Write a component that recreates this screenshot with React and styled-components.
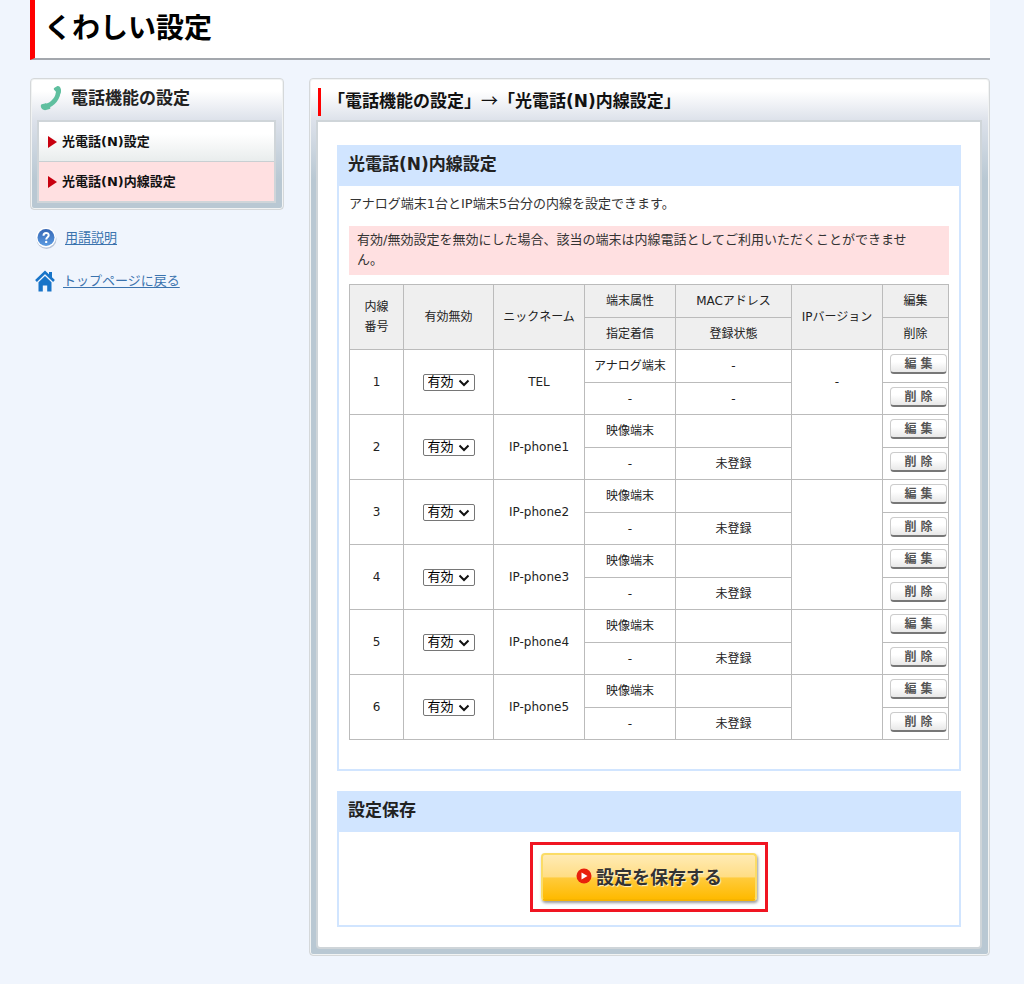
import React, { useState } from 'react';
import styled, { createGlobalStyle } from 'styled-components';

const initialRows = [
  { no: 1, name: 'TEL', type: 'アナログ端末', incoming: '-', mac: '-', status: '-', ip: '-' },
  { no: 2, name: 'IP-phone1', type: '映像端末', incoming: '-', mac: '', status: '未登録', ip: '' },
  { no: 3, name: 'IP-phone2', type: '映像端末', incoming: '-', mac: '', status: '未登録', ip: '' },
  { no: 4, name: 'IP-phone3', type: '映像端末', incoming: '-', mac: '', status: '未登録', ip: '' },
  { no: 5, name: 'IP-phone4', type: '映像端末', incoming: '-', mac: '', status: '未登録', ip: '' },
  { no: 6, name: 'IP-phone5', type: '映像端末', incoming: '-', mac: '', status: '未登録', ip: '' },
];

const menus = [
  { label: '光電話(N)設定', active: false },
  { label: '光電話(N)内線設定', active: true },
];

const PhoneIcon = () => (
  <svg width="22" height="26" viewBox="0 0 22 26" aria-hidden="true">
    <path
      d="M18.200 5C18.800 12 13.500 19.800 4.500 21.800"
      fill="none"
      stroke="#5fbf9f"
      strokeWidth="4.600"
      strokeLinecap="round"
    />
    <path
      d="M14.500 2.800 17 1.200c1.600-.9 3.300.6 3.800 2.800.5 2 .2 4.300-1 5l-2.600 1.200c-.9.300-1.600-.6-1.400-1.500l.3-2-1.800-1.800c-.8-.7-.7-1.600.200-2.100z"
      fill="#5fbf9f"
    />
    <path
      d="M1.800 19.200c-1.300.5-1.200 2.300-.4 3.800.8 1.600 2.800 2.400 4.600 2.100l3.600-1.100c.9-.4 1-1.400.4-2.100L6.700 18.900c-.5-.5-1-.6-1.700-.5z"
      fill="#5fbf9f"
    />
  </svg>
);

const HelpIcon = () => (
  <svg width="22" height="24" viewBox="0 0 22 24" aria-hidden="true">
    <defs>
      <linearGradient id="help" x1="0" y1="0" x2="0" y2="1">
        <stop offset="0" stopColor="#3566b4" />
        <stop offset="1" stopColor="#5b9be2" />
      </linearGradient>
    </defs>
    <circle cx="11.500" cy="13" r="10" fill="#b9c6da" />
    <circle cx="11" cy="11.500" r="10" fill="#fff" />
    <circle cx="11" cy="11.500" r="8.500" fill="url(#help)" />
    <path
      d="M8.500 9.700c0-3.700 5.400-3.500 5.200-.3-.1 1.900-2.500 1.800-2.500 4"
      fill="none"
      stroke="#fff"
      strokeWidth="2"
    />
    <circle cx="11.200" cy="15.900" r="1.200" fill="#fff" />
  </svg>
);

const HomeIcon = () => (
  <svg width="20" height="22" viewBox="0 0 20 22" aria-hidden="true">
    <path d="M14 2h3v6l-3-3z" fill="#1874c8" />
    <path d="M1 11 10 2.300l9 8.700" fill="none" stroke="#1874c8" strokeWidth="2.600" />
    <path d="M10 6 3.500 12.300V21.500h4.300v-6h4.400v6h4.300v-9.200z" fill="#1874c8" />
  </svg>
);

const PlayIcon = () => (
  <svg width="16" height="16" viewBox="0 0 16 16" aria-hidden="true">
    <circle cx="8" cy="8" r="7.500" fill="#e8200c" />
    <path d="M5.500 4.500 11.500 8l-6 3.500z" fill="#fff" />
  </svg>
);

const App = () => {
  const [enabled, setEnabled] = useState({});

  const handleChange = (no, value) => {
    setEnabled({ ...enabled, [no]: value });
  };

  return (
    <>
      <GlobalStyle />
      <Page>
        <Header>
          <PageTitle>くわしい設定</PageTitle>
        </Header>
        <Columns>
          <Side>
            <Panel>
              <SideTitle>
                <PhoneIcon />
                電話機能の設定
              </SideTitle>
              <Menu>
                {menus.map((menu) => (
                  <MenuItem key={menu.label} $active={menu.active}>
                    <MenuLink href="#">{menu.label}</MenuLink>
                  </MenuItem>
                ))}
              </Menu>
            </Panel>
            <Links>
              <LinkRow>
                <HelpIcon />
                <TextLink href="#">用語説明</TextLink>
              </LinkRow>
              <LinkRow>
                <HomeIcon />
                <TextLink href="#">トップページに戻る</TextLink>
              </LinkRow>
            </Links>
          </Side>
          <Main>
            <Panel>
              <Breadcrumb>
                <BreadcrumbText>
                  「電話機能の設定」<Arrow>→</Arrow>「光電話(N)内線設定」
                </BreadcrumbText>
              </Breadcrumb>
              <Content>
                <Section>
                  <SectionTitle>光電話(N)内線設定</SectionTitle>
                  <SectionBody>
                    <Description>アナログ端末1台とIP端末5台分の内線を設定できます。</Description>
                    <Notice>
                      有効/無効設定を無効にした場合、該当の端末は内線電話としてご利用いただくことができません。
                    </Notice>
                    <Table>
                      <colgroup>
                        <Col $width={54} />
                        <Col $width={90} />
                        <Col $width={91} />
                        <Col $width={91} />
                        <Col />
                        <Col $width={91} />
                        <Col $width={66} />
                      </colgroup>
                      <thead>
                        <Row $height={33}>
                          <Th rowSpan={2}>
                            内線
                            <br />
                            番号
                          </Th>
                          <Th rowSpan={2}>有効無効</Th>
                          <Th rowSpan={2}>ニックネーム</Th>
                          <Th>端末属性</Th>
                          <Th>MACアドレス</Th>
                          <Th rowSpan={2}>IPバージョン</Th>
                          <Th>編集</Th>
                        </Row>
                        <Row $height={32}>
                          <Th>指定着信</Th>
                          <Th>登録状態</Th>
                          <Th>削除</Th>
                        </Row>
                      </thead>
                      <tbody>
                        {initialRows.map((row) => (
                          <React.Fragment key={row.no}>
                            <Row $height={33}>
                              <Td rowSpan={2}>{row.no}</Td>
                              <Td rowSpan={2}>
                                <SelectWrap>
                                  <Select
                                    aria-label={`内線${row.no} 有効無効`}
                                    value={enabled[row.no] || 'on'}
                                    onChange={(e) => handleChange(row.no, e.target.value)}
                                  >
                                    <option value="on">有効</option>
                                    <option value="off">無効</option>
                                  </Select>
                                  <Chevron viewBox="0 0 12 8" aria-hidden="true">
                                    <path d="M1.500 1.500 6 6l4.500-4.500" />
                                  </Chevron>
                                </SelectWrap>
                              </Td>
                              <Td rowSpan={2}>{row.name}</Td>
                              <Td>{row.type}</Td>
                              <Td>{row.mac}</Td>
                              <Td rowSpan={2}>{row.ip}</Td>
                              <ActionTd>
                                <SmallButton type="button">編 集</SmallButton>
                              </ActionTd>
                            </Row>
                            <Row $height={32}>
                              <Td>{row.incoming}</Td>
                              <Td>{row.status}</Td>
                              <ActionTd>
                                <SmallButton type="button">削 除</SmallButton>
                              </ActionTd>
                            </Row>
                          </React.Fragment>
                        ))}
                      </tbody>
                    </Table>
                  </SectionBody>
                </Section>
                <Section>
                  <SectionTitle>設定保存</SectionTitle>
                  <SaveBody>
                    <SaveFrame>
                      <SaveButton type="button">
                        <PlayIcon />
                        設定を保存する
                      </SaveButton>
                    </SaveFrame>
                  </SaveBody>
                </Section>
              </Content>
            </Panel>
          </Main>
        </Columns>
      </Page>
    </>
  );
};

const GlobalStyle = createGlobalStyle`
  * {
    box-sizing: border-box;
  }
  body {
    margin: 0;
    background-color: #f0f5fd;
    color: #333;
    font-family: 'DejaVu Sans', 'Noto Sans CJK JP', sans-serif;
    font-size: 13px;
    line-height: 20px;
  }
  h1, h2, h3, p, ul {
    margin: 0;
    padding: 0;
  }
  button, select {
    font-family: inherit;
  }
`;

const Page = styled.div`
  padding: 0 34px 29px 30px;
`;

const Header = styled.header`
  background-color: white;
  border-left: 5px solid #f00;
  border-bottom: 2px solid #a3a7ad;
  padding: 8px 9px;
`;

const PageTitle = styled.h1`
  color: #000;
  font-size: 28px;
  font-weight: 700;
  line-height: 42px;
`;

const Columns = styled.div`
  display: flex;
  align-items: flex-start;
  column-gap: 25px;
  margin-top: 18px;
`;

const Side = styled.aside`
  flex: 0 0 254px;
`;

const Main = styled.main`
  flex: 1;
  min-width: 0;
`;

const Panel = styled.div`
  padding: 0 7px 6px 6px;
  border: 1px solid #d5d8da;
  border-radius: 4px;
  background: linear-gradient(#fff 12px, #dce1ea 42px, #b9c8d3 100px);
  box-shadow: inset 0 0 0 1px #f1f3f3;
`;

const SideTitle = styled.h2`
  display: flex;
  align-items: center;
  column-gap: 9px;
  height: 41px;
  padding: 0 0 4px 3px;
  color: #222;
  font-size: 17px;
  font-weight: 700;
`;

const Menu = styled.ul`
  list-style: none;
  border: 2px solid #cfd5d9;
`;

const MenuItem = styled.li`
  background: ${({ $active }) => ($active ? '#ffe0e1' : 'linear-gradient(#fff 30%, #e9eded)')};
  & + & {
    border-top: 1px solid #c9cfd2;
  }
`;

const MenuLink = styled.a`
  display: flex;
  align-items: center;
  column-gap: 5px;
  height: 39px;
  padding-left: 9px;
  color: #111;
  font-weight: 700;
  text-decoration: none;
  &::before {
    content: '';
    border: 6px solid transparent;
    border-left: 9px solid #c8000f;
    border-right: 0;
  }
`;

const Links = styled.ul`
  display: flex;
  flex-direction: column;
  row-gap: 19px;
  margin-top: 16px;
  padding-left: 5px;
  list-style: none;
`;

const LinkRow = styled.li`
  display: flex;
  align-items: center;
  column-gap: 8px;
  height: 24px;
`;

const TextLink = styled.a`
  color: #3b73ae;
  text-underline-offset: 2px;
`;

const Breadcrumb = styled.div`
  height: 41px;
  padding: 9px 0 0 2px;
`;

const BreadcrumbText = styled.h2`
  height: 28px;
  padding-left: 7px;
  border-left: 3px solid #f00;
  color: #111;
  font-size: 17px;
  font-weight: 700;
  line-height: 24px;
`;

const Arrow = styled.span`
  font-family: 'Noto Sans CJK JP', sans-serif;
  font-weight: 400;
`;

const Content = styled.div`
  display: flex;
  flex-direction: column;
  row-gap: 20px;
  padding: 23px 19px 20px 19px;
  border: 2px solid #cfd5d9;
  border-radius: 0 0 4px 4px;
  background-color: white;
`;

const Section = styled.section`
  border: 2px solid #d1e5ff;
  border-top: 0;
`;

const SectionTitle = styled.h3`
  padding: 0 9px 3px;
  background-color: #d1e5ff;
  color: #222;
  font-size: 17px;
  font-weight: 700;
  line-height: 38px;
`;

const SectionBody = styled.div`
  padding: 8px 10px 29px;
`;

const Description = styled.p`
  margin-bottom: 12px;
`;

const Notice = styled.p`
  margin-bottom: 9px;
  padding: 4px 24px 5px 8px;
  background-color: #ffe0e1;
`;

const Table = styled.table`
  width: 100%;
  table-layout: fixed;
  border-collapse: collapse;
  color: #222;
  font-size: 12px;
  text-align: center;
`;

const Col = styled.col`
  width: ${({ $width }) => ($width ? `${$width}px` : 'auto')};
`;

const Row = styled.tr`
  height: ${({ $height }) => $height}px;
`;

const Th = styled.th`
  padding: 0;
  border: 1px solid #bbb;
  background-color: #efefef;
  font-weight: 400;
`;

const Td = styled.td`
  padding: 0;
  border: 1px solid #bbb;
`;

const ActionTd = styled(Td)`
  padding: 4px 0 0 7px;
  vertical-align: top;
`;

const SmallButton = styled.button`
  display: block;
  width: 57px;
  height: 20px;
  padding: 0;
  border: 1px solid #ccc;
  border-bottom: 2px solid #777;
  border-radius: 4px;
  background: linear-gradient(#fff 40%, #e8e8e8);
  color: #555;
  font-size: 12px;
  font-weight: 700;
  line-height: 16px;
`;

const SelectWrap = styled.div`
  position: relative;
  width: 52px;
  margin: 0 auto;
`;

const Select = styled.select`
  display: block;
  width: 100%;
  height: 17px;
  padding: 0 0 2px 4px;
  border: 1px solid #767676;
  border-radius: 2px;
  background-color: white;
  color: #000;
  font-size: 13px;
  line-height: 13px;
  appearance: none;
`;

const Chevron = styled.svg`
  position: absolute;
  top: 5px;
  right: 5px;
  width: 12px;
  height: 8px;
  fill: none;
  stroke: #111;
  stroke-width: 2;
  pointer-events: none;
`;

const SaveBody = styled.div`
  display: flex;
  justify-content: center;
  padding: 10px 10px 13px;
`;

const SaveFrame = styled.div`
  padding: 8px;
  border: 3px solid #f01522;
`;

const SaveButton = styled.button`
  display: flex;
  align-items: center;
  justify-content: center;
  column-gap: 4px;
  width: 216px;
  height: 48px;
  padding: 0 0 3px;
  border: 2px solid #fbdc66;
  border-bottom-color: #f7b400;
  border-radius: 4px;
  background: linear-gradient(#ffebb5, #ffdd84 50%, #ffcb3c 52%, #ffba00);
  box-shadow: 1px 2px 3px rgba(0, 0, 0, 0.4);
  color: #333;
  font-size: 18px;
  font-weight: 700;
  text-shadow: 1px 1px 1px #fff3cc;
`;

export default App;
